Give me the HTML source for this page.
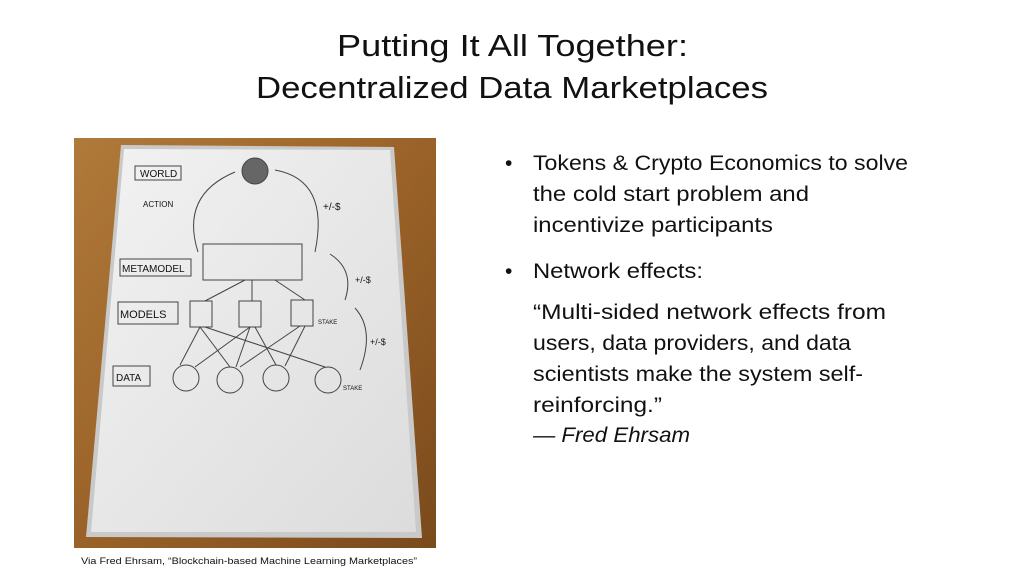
<!DOCTYPE html>
<html><head><meta charset="utf-8"><style>
html,body{margin:0;padding:0;background:#fff;width:1024px;height:576px;overflow:hidden}
svg{display:block}
text{font-family:"Liberation Sans",sans-serif;fill:#111}
</style></head><body>
<svg width="1024" height="576" viewBox="0 0 1024 576" xmlns="http://www.w3.org/2000/svg">
<text x="337" y="56" font-size="31" textLength="351" lengthAdjust="spacingAndGlyphs">Putting It All Together:</text>
<text x="256" y="98" font-size="31" textLength="512" lengthAdjust="spacingAndGlyphs">Decentralized Data Marketplaces</text>

<!-- photo -->
<defs>
<linearGradient id="wood" x1="0" y1="0" x2="1" y2="1">
<stop offset="0" stop-color="#b07a3a"/><stop offset="0.5" stop-color="#9a6228"/><stop offset="1" stop-color="#7a4a1c"/>
</linearGradient>
<linearGradient id="board" x1="0" y1="0" x2="1" y2="1">
<stop offset="0" stop-color="#f2f2f2"/><stop offset="1" stop-color="#dcdcdc"/>
</linearGradient>
</defs>
<rect x="74" y="138" width="362" height="410" fill="url(#wood)"/>
<polygon points="121,145 394,147 422,538 86,537" fill="#c9c9c9"/>
<polygon points="124,149 390,150 416,532 91,532" fill="url(#board)"/>
<g fill="none" stroke="#444" stroke-width="1">
<rect x="135" y="166" width="46" height="14"/>
<rect x="120" y="259" width="71" height="17"/>
<rect x="118" y="302" width="60" height="22"/>
<rect x="113" y="366" width="37" height="20"/>
<circle cx="255" cy="171" r="13" fill="#666"/>
<path d="M198,252 Q180,195 235,172"/>
<path d="M275,170 Q330,180 315,252"/>
<rect x="203" y="244" width="99" height="36"/>
<path d="M330,254 Q355,270 345,300"/>
<path d="M355,308 Q375,330 360,370"/>
<rect x="190" y="301" width="22" height="26"/><rect x="239" y="301" width="22" height="26"/><rect x="291" y="300" width="22" height="26"/>
<line x1="245" y1="280" x2="205" y2="301"/><line x1="252" y1="280" x2="252" y2="301"/><line x1="275" y1="280" x2="305" y2="300"/>
<circle cx="186" cy="378" r="13"/><circle cx="230" cy="380" r="13"/><circle cx="276" cy="378" r="13"/><circle cx="328" cy="380" r="13"/>
<line x1="200" y1="327" x2="180" y2="365"/><line x1="200" y1="327" x2="230" y2="367"/><line x1="205" y1="327" x2="325" y2="367"/>
<line x1="250" y1="327" x2="195" y2="367"/><line x1="250" y1="327" x2="236" y2="367"/><line x1="255" y1="327" x2="276" y2="365"/>
<line x1="300" y1="326" x2="240" y2="367"/><line x1="305" y1="326" x2="285" y2="366"/>
</g>
<g font-size="8" fill="#333">
<text x="140" y="177" font-size="10" fill="#555">WORLD</text>
<text x="143" y="207">ACTION</text>
<text x="323" y="210" font-size="10">+/-$</text>
<text x="122" y="272" font-size="10">METAMODEL</text>
<text x="355" y="283" font-size="9">+/-$</text>
<text x="120" y="318" font-size="11">MODELS</text>
<text x="370" y="345" font-size="9">+/-$</text>
<text x="116" y="381" font-size="10">DATA</text>
<text x="318" y="324" font-size="6">STAKE</text>
<text x="343" y="390" font-size="6">STAKE</text>
</g>
<text x="81" y="564" font-size="9" textLength="336" lengthAdjust="spacingAndGlyphs">Via Fred Ehrsam, “Blockchain-based Machine Learning Marketplaces”</text>

<!-- bullets -->
<g font-size="21">
<text x="505" y="170">•</text>
<text x="533" y="170" textLength="375" lengthAdjust="spacingAndGlyphs">Tokens &amp; Crypto Economics to solve</text>
<text x="533" y="201" textLength="276" lengthAdjust="spacingAndGlyphs">the cold start problem and</text>
<text x="533" y="232" textLength="240" lengthAdjust="spacingAndGlyphs">incentivize participants</text>
<text x="505" y="278">•</text>
<text x="533" y="278" textLength="170" lengthAdjust="spacingAndGlyphs">Network effects:</text>
<text x="533" y="319" textLength="353" lengthAdjust="spacingAndGlyphs">“Multi-sided network effects from</text>
<text x="533" y="350" textLength="318" lengthAdjust="spacingAndGlyphs">users, data providers, and data</text>
<text x="533" y="381" textLength="330" lengthAdjust="spacingAndGlyphs">scientists make the system self-</text>
<text x="533" y="412" textLength="129" lengthAdjust="spacingAndGlyphs">reinforcing.”</text>
<text x="533" y="442" font-style="italic" textLength="157" lengthAdjust="spacingAndGlyphs">— Fred Ehrsam</text>
</g>
</svg>
</body></html>
